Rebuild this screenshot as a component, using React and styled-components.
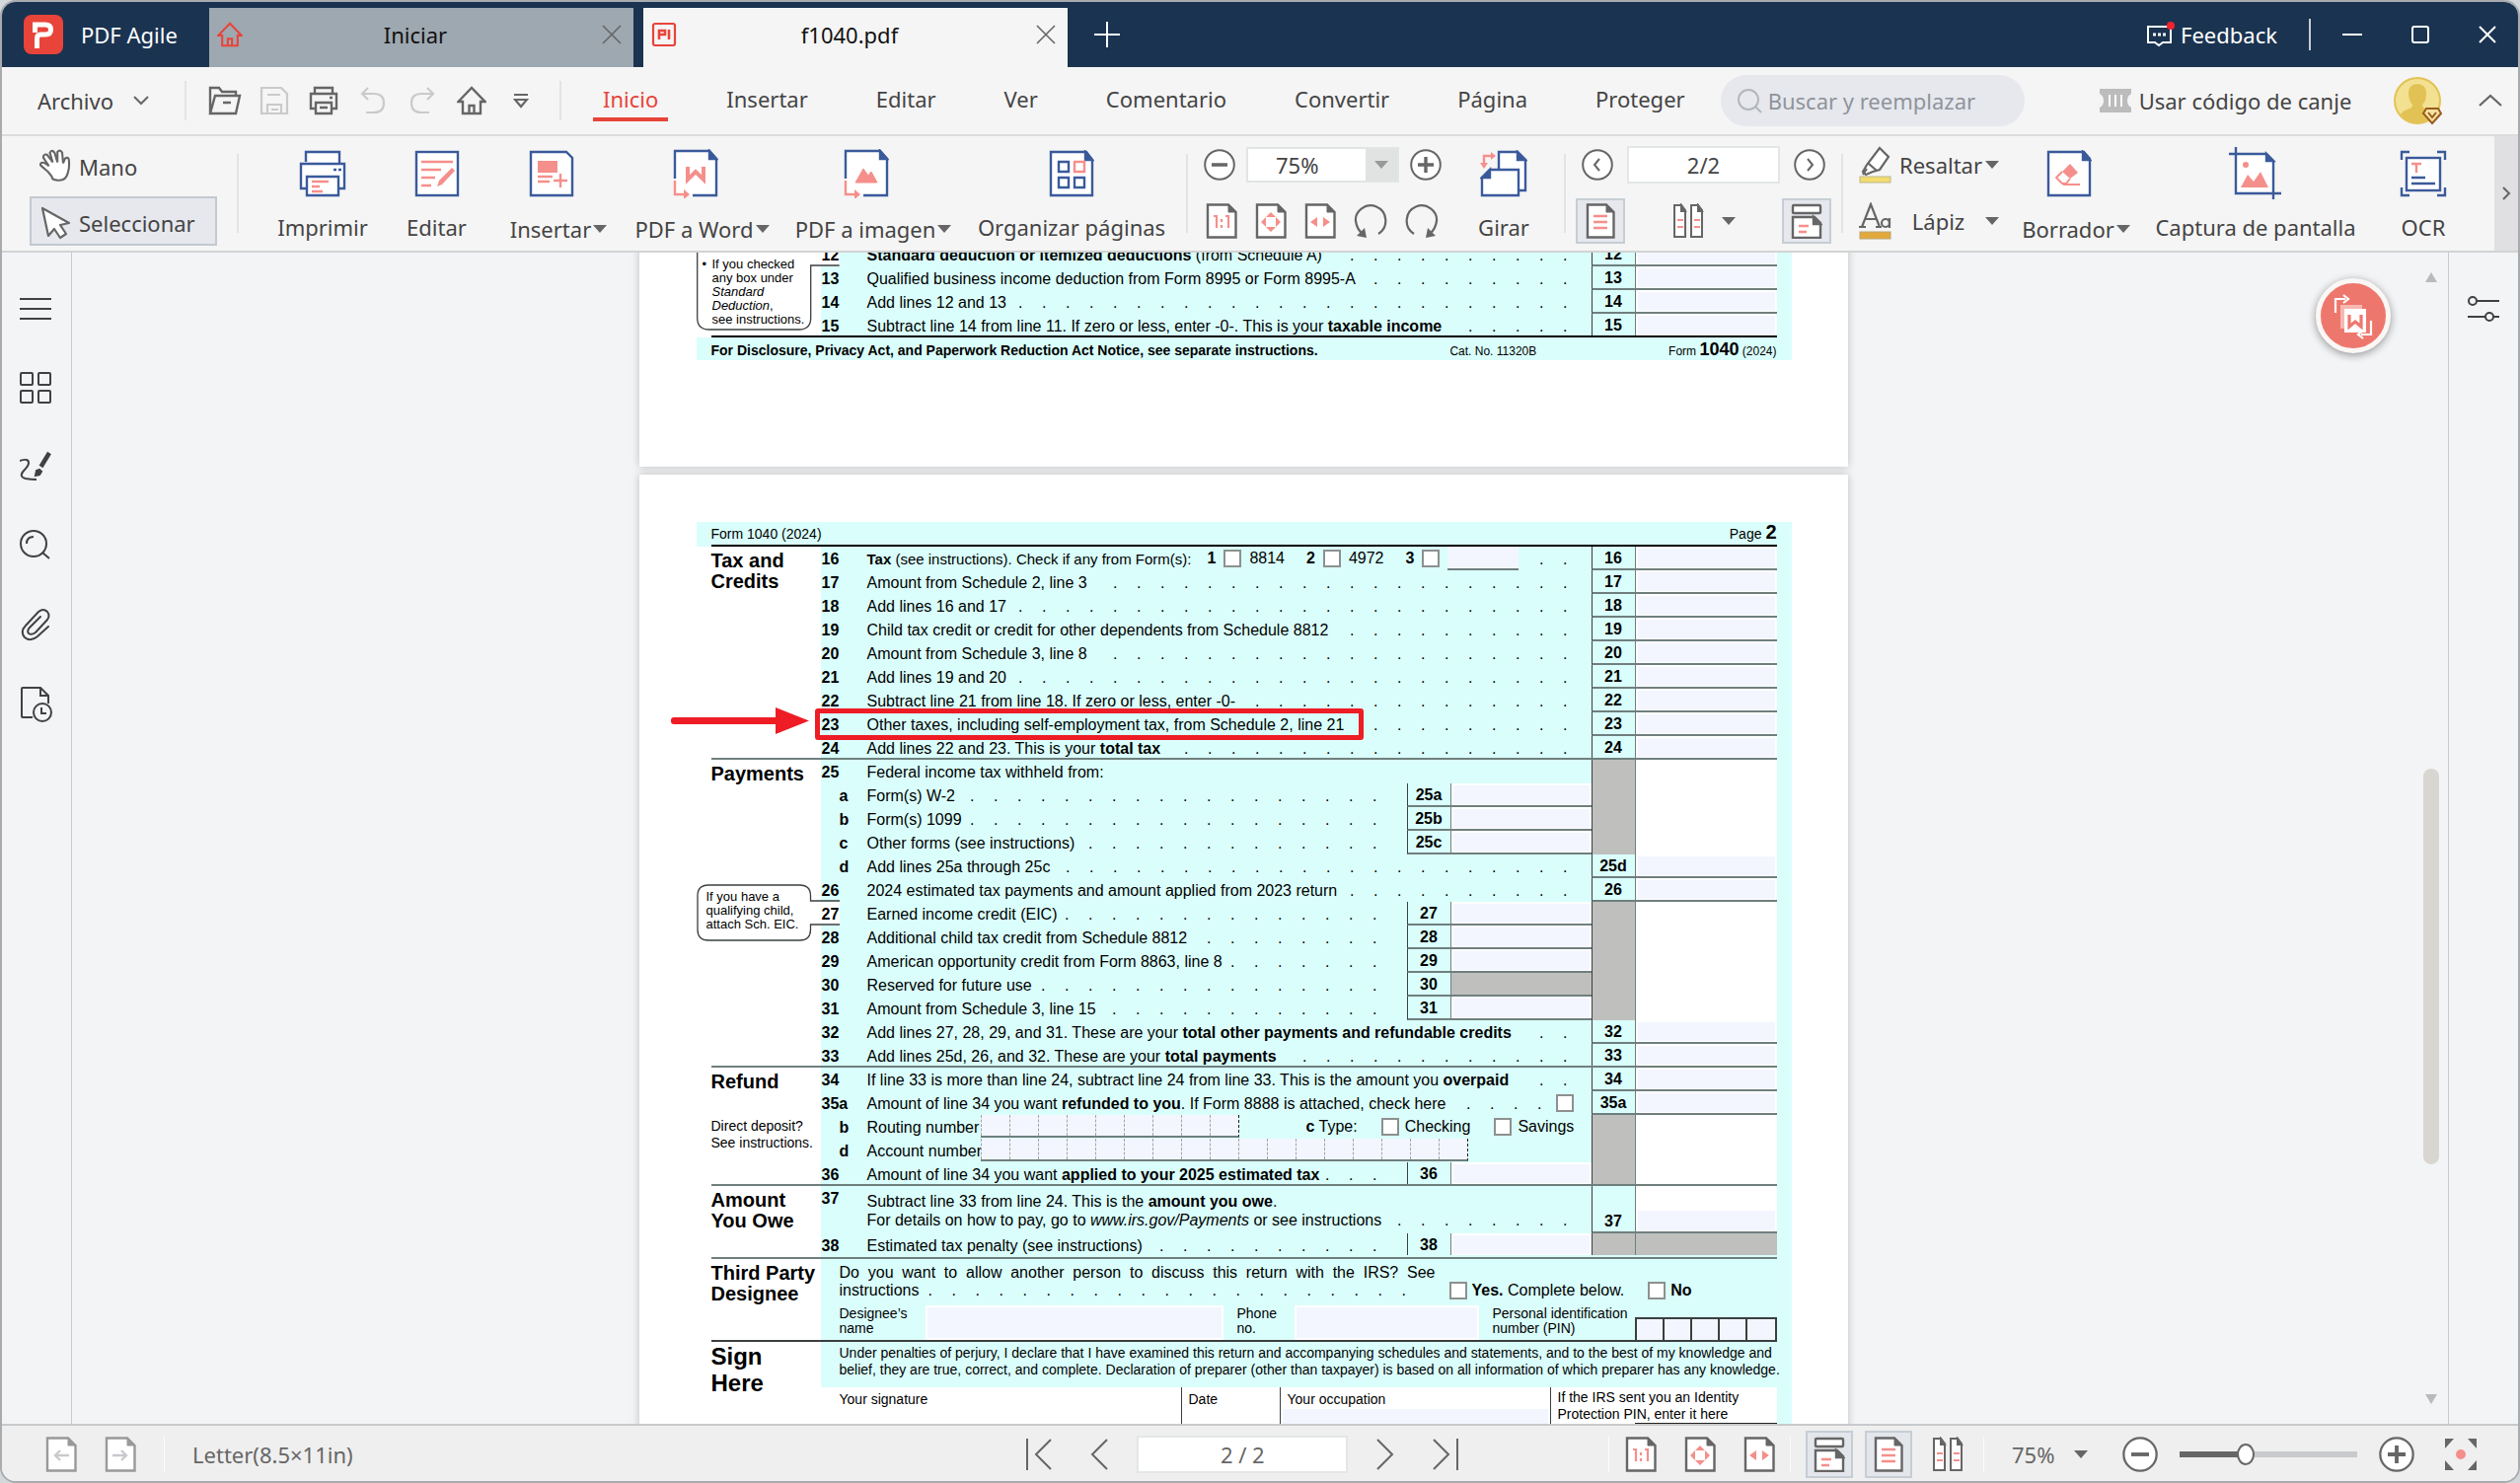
import React from "react";
import styled, { createGlobalStyle, css } from "styled-components";

const c = {
  navy: "#1a3350",
  chrome: "#f5f5f5",
  canvas: "#f3f4f6",
  line: "#dcdcdc",
  text: "#444444",
  icon: "#666666",
  blue: "#3a5a9b",
  pink: "#f58f8b",
  red: "#e8443a",
  cyan: "#dafefb",
  field: "#f3f6ff",
  rule: "#6f7f7e",
  dark: "#3a3f3f",
  shade: "#bfbfbd",
};

const GlobalStyle = createGlobalStyle`
  *, *::before, *::after { box-sizing: border-box; }
  body { margin: 0; background: #d3d8dc; }
  button, input, select { font: inherit; color: inherit; }
`;

/* ---------- window ---------- */

const Window = styled.div`
  display: flex;
  flex-direction: column;
  height: 100vh;
  border: 2px solid #a9acaf;
  border-radius: 16px;
  overflow: hidden;
  background: ${c.chrome};
  color: ${c.text};
  font-family: "Noto Sans", "Open Sans", sans-serif;
  font-size: 22px;
  line-height: 30px;
`;

const BareButton = styled.button`
  display: flex;
  align-items: center;
  justify-content: center;
  padding: 0;
  border: 0;
  background: none;
  cursor: pointer;
  white-space: nowrap;
`;

const TitleBar = styled.header`
  display: flex;
  align-items: center;
  flex: none;
  height: 66px;
  padding-right: 22px;
  background: ${c.navy};
  color: #fff;
`;

const Brand = styled.div`
  display: flex;
  align-items: center;
  gap: 18px;
  width: 210px;
  padding-left: 22px;
`;

const Tabs = styled.nav`
  display: flex;
  align-self: flex-end;
  gap: 10px;
`;

const Tab = styled.div`
  display: flex;
  align-items: center;
  width: 430px;
  height: 60px;
  padding: 0 12px 6px 8px;
  background: ${(p) => (p.$active ? c.chrome : "#9ea8b0")};
  color: #111;
`;

const TabTitle = styled.span`
  flex: 1;
  padding-right: 14px;
  text-align: center;
`;

const TitleActions = styled.div`
  display: flex;
  align-items: center;
  gap: 50px;
  margin-left: auto;
`;

const Feedback = styled(BareButton)`
  gap: 6px;
  color: #fff;
`;

const TitleDivider = styled.span`
  width: 2px;
  height: 32px;
  margin: 0 -18px;
  background: #c7ccd2;
`;

const NewTab = styled(BareButton)`
  width: 80px;
  color: #fff;
`;

/* ---------- menu ---------- */

const MenuBar = styled.div`
  display: flex;
  align-items: center;
  flex: none;
  height: 70px;
  padding: 0 16px 0 36px;
  border-bottom: 2px solid ${c.line};
`;

const FileMenu = styled(BareButton)`
  gap: 20px;
  margin-right: 14px;
`;

const Divider = styled.span`
  flex: none;
  width: 2px;
  height: ${(p) => p.$h || 80}px;
  margin: 0 ${(p) => p.$m || 16}px;
  background: #e2e4e4;
`;

const QuickTools = styled.div`
  display: flex;
  gap: 16px;
`;

const QuickButton = styled(BareButton)`
  width: 34px;
  height: 34px;
`;

const Menu = styled.nav`
  display: flex;
  gap: 49px;
  margin-left: 10px;
`;

const MenuItem = styled(BareButton)`
  height: 42px;
  padding: 0 10px;
  border-bottom: 4px solid ${(p) => (p.$active ? c.red : "transparent")};
  color: ${(p) => (p.$active ? c.red : c.text)};
`;

const Search = styled.label`
  display: flex;
  align-items: center;
  gap: 6px;
  width: 308px;
  height: 52px;
  margin: 0 76px 0 26px;
  padding: 0 16px;
  border-radius: 26px;
  background: #e6e8ee;
  color: #8f9499;
`;

const SearchInput = styled.input`
  flex: 1;
  min-width: 0;
  padding: 0;
  border: 0;
  outline: 0;
  background: none;
  &::placeholder {
    color: #8f9499;
    opacity: 1;
  }
`;

const MenuEnd = styled.div`
  display: flex;
  align-items: center;
  margin-left: auto;
`;

const Redeem = styled(BareButton)`
  gap: 8px;
`;

const AccountButton = styled(BareButton)`
  margin: 0 34px 0 42px;
`;

/* ---------- ribbon ---------- */

const Ribbon = styled.div`
  display: flex;
  flex: none;
  align-items: stretch;
  height: 118px;
  padding-left: 28px;
  border-bottom: 2px solid #d2d3d4;
`;

const RibbonDivider = styled(Divider)`
  margin-top: 18px;
`;

const Stack = styled.div`
  display: grid;
  grid-template-rows: 42px 50px;
  row-gap: 11px;
  align-content: start;
  padding-top: 8px;
  margin-right: ${(p) => p.$end || 0}px;
`;

const StackRow = styled.div`
  display: flex;
  align-items: center;
  gap: ${(p) => p.$gap || 0}px;
  padding-left: ${(p) => p.$pad || 0}px;
`;

const ModeButton = styled(BareButton)`
  justify-content: flex-start;
  gap: 6px;
  width: 190px;
  padding: 3px 0 0 8px;
  border: 2px solid ${(p) => (p.$active ? "#c3c9d0" : "transparent")};
  background: ${(p) => (p.$active ? "#e7e8ee" : "none")};
`;

const ToolButton = styled(BareButton)`
  flex-direction: column;
  justify-content: flex-start;
  flex: none;
  width: ${(p) => p.$w}px;
  padding-top: 13px;
`;

const ToolIcon = styled.span`
  display: flex;
  align-items: center;
  justify-content: center;
  height: 50px;
  margin-right: ${(p) => (p.$menu ? 14 : 0)}px;
`;

const ToolLabel = styled.span`
  display: flex;
  align-items: center;
  gap: 2px;
  padding-top: ${(p) => (p.$menu ? 16 : 14)}px;
`;

const ToggleButton = styled(BareButton)`
  width: 50px;
  height: 46px;
  border: 2px solid #c6cdd5;
  background: #e6e8ee;
`;

const SpreadButton = styled(BareButton)`
  gap: 18px;
`;

const ZoomBox = styled.span`
  display: flex;
  width: 155px;
  height: 36px;
  border: 2px solid #e1e5e4;
  background: #fff;
`;

const ZoomSelect = styled.select`
  flex: 1;
  min-width: 0;
  padding: 0 0 0 28px;
  border: 0;
  background: none;
  appearance: none;
  line-height: 30px;
`;

const ZoomArrow = styled.span`
  display: flex;
  align-items: center;
  justify-content: center;
  width: 32px;
  background: #e1e3e3;
`;

const PageInput = styled.input`
  width: ${(p) => p.$w}px;
  height: 38px;
  padding: 0;
  border: 2px solid #e3e7e6;
  background: #fff;
  text-align: center;
`;

const SpreadRow = styled.div`
  display: flex;
  align-items: center;
  justify-content: space-between;
  margin: 0 -6px;
`;

const Split = styled(BareButton)`
  justify-content: flex-start;
  gap: 8px;
`;

const SplitLabel = styled.span`
  width: 79px;
  text-align: center;
`;

const RibbonScroll = styled(BareButton)`
  width: 24px;
  margin-left: auto;
  background: #e0dfe1;
`;

/* ---------- work area ---------- */

const Work = styled.div`
  display: flex;
  flex: 1;
  min-height: 0;
  background: ${c.canvas};
`;

const Rail = styled.aside`
  display: flex;
  flex-direction: column;
  align-items: center;
  gap: 32px;
  width: 71px;
  padding: 33px 0 0;
  padding-right: ${(p) => (p.$right ? 0 : 2)}px;
  border-${(p) => (p.$right ? "left" : "right")}: 1px solid #c9cbce;
`;

const RailButton = styled(BareButton)`
  width: 48px;
  height: 48px;
  color: #3f4143;
`;

const Viewer = styled.main`
  position: relative;
  flex: 1;
  min-width: 0;
  overflow: hidden;
  color: #000;
  font-family: "Liberation Sans", Arial, sans-serif;
  font-size: 16px;
  line-height: 24px;
`;

const ScrollTrack = styled.div`
  display: flex;
  flex-direction: column;
  align-items: center;
  width: 34px;
  padding: 20px 0;
`;

const ScrollThumb = styled.span`
  width: 16px;
  height: 35%;
  margin: auto 0 233px;
  border-radius: 8px;
  background: #d9d6d1;
`;

const FloatButton = styled(BareButton)`
  position: absolute;
  right: 24px;
  top: 26px;
  width: 76px;
  height: 76px;
  border: 5px solid #faf7f5;
  border-radius: 50%;
  background: #ee776d;
  box-shadow: 0 2px 8px rgba(0, 0, 0, 0.4);
`;

/* ---------- form pages ---------- */

const Page = styled.article`
  width: 1225px;
  margin: 0 auto 8px;
  padding: ${(p) => (p.$first ? "0 57px 108px 58px" : "48px 57px 0 58px")};
  margin-top: ${(p) => (p.$first ? -10 : 0)}px;
  background: #fff;
  box-shadow: 0 0 8px rgba(0, 0, 0, 0.22);
`;

const Band = styled.div`
  display: flex;
  justify-content: space-between;
  padding: 0 15px;
  background: ${c.cyan};
  font-size: 14px;
`;

const HeadInner = styled.div`
  display: flex;
  flex: 1;
  align-items: baseline;
  justify-content: space-between;
  height: 25px;
  border-bottom: 2px solid #000;
  line-height: 20px;
`;

const FootInner = styled(HeadInner)`
  height: 23px;
  border: 0;
  line-height: 24px;
`;

const Small = styled.span`
  font-size: 12px;
`;

const Big = styled.b`
  font-size: ${(p) => p.$s}px;
`;

const Shell = styled.section`
  padding: 0 15px;
  background: linear-gradient(90deg, #fff 126px, ${c.cyan} 126px);
`;

const SectionInner = styled.div`
  position: relative;
  display: flex;
  border-bottom: ${(p) => (p.$open ? 0 : 2)}px solid ${(p) => p.$rule || c.rule};
`;

const Side = styled.div`
  width: 111px;
  padding-top: ${(p) => (p.$large ? 1 : 4)}px;
  font-size: 14px;
  line-height: 17px;
`;

const SideTitle = styled.h2`
  margin: 0 0 26px;
  font-size: ${(p) => (p.$large ? 24 : 20)}px;
  line-height: ${(p) => (p.$large ? 27 : 21)}px;
  white-space: nowrap;
`;

const Body = styled.div`
  flex: 1;
  min-width: 0;
`;

const Line = styled.div`
  position: relative;
  display: flex;
  height: ${(p) => (p.$tall ? 48 : p.$last ? 22 : 24)}px;
  line-height: 26px;
`;

const LineNo = styled.b`
  flex: none;
  width: ${(p) => (p.$notch ? 19 : 47)}px;
  margin-right: ${(p) => (p.$notch ? 28 : 0)}px;
  padding-left: ${(p) => (p.$sub ? 19 : 1)}px;
  background: ${(p) => (p.$notch ? "#fff" : "none")};
`;

const LineText = styled.span`
  flex: none;
  font-size: ${(p) => (p.$tight ? 15 : 16)}px;
  white-space: nowrap;
`;

const TallText = styled(LineText)`
  padding-top: 6px;
  line-height: 19px;
`;

const Leader = styled.span`
  display: flex;
  flex: 1;
  justify-content: flex-end;
  align-self: ${(p) => (p.$low ? "flex-end" : "auto")};
  min-width: 0;
  margin-right: ${(p) => (p.$short ? 30 : p.$empty ? 0 : 24)}px;
`;

const Dot = styled.span`
  flex: none;
  width: 24px;
  text-align: right;
`;

const ruleCss = css`
  border-bottom: ${(p) => (p.$rule ? 2 : 0)}px solid ${c.rule};
`;

const NoCell = styled.b`
  display: flex;
  align-items: flex-end;
  justify-content: center;
  flex: none;
  width: 44px;
  border-left: 1px solid ${c.dark};
  background: ${(p) => (p.$shade ? c.shade : c.cyan)};
  line-height: 20px;
  ${ruleCss}
`;

const FieldCell = styled.span`
  display: flex;
  flex: none;
  align-items: flex-end;
  width: ${(p) => (p.$mid ? 143 : 144)}px;
  padding: 2px 2px 1px;
  border-left: 1px solid ${c.rule};
  background: ${(p) => (p.$shade ? c.shade : "#fff")};
  ${ruleCss}
`;

const Field = styled.input`
  width: 100%;
  height: 100%;
  max-height: 20px;
  padding: 0;
  border: 0;
  background: ${c.field};
`;

const Check = styled.input`
  flex: none;
  width: 18px;
  height: 18px;
  margin: 0;
  border: 2px solid #8d9090;
  background: #fff;
  appearance: none;
`;

const Option = styled.label`
  display: flex;
  align-items: center;
  gap: ${(p) => p.$gap || 6}px;
  margin-left: ${(p) => p.$ml || 0}px;
  margin-right: ${(p) => p.$mr || 0}px;
  white-space: nowrap;
`;

const BlankField = styled.input`
  width: 72px;
  height: 24px;
  margin-left: 8px;
  padding: 0;
  border: 0;
  border-bottom: 2px solid ${c.rule};
  background: ${c.field};
`;

const CombLabel = styled.label`
  display: inline-block;
  width: 115px;
`;

const Comb = styled.span`
  display: flex;
  height: 23px;
  border-bottom: 2px solid ${c.rule};
  border-right: 1px dashed #222;
`;

const CombCell = styled.input`
  width: 29px;
  padding: 0;
  border: 0;
  border-left: 1px dashed #a5a5a5;
  border-radius: 0;
  background: ${c.field};
`;

const Mark = styled.span`
  position: absolute;
  left: -6px;
  top: -4px;
  width: 556px;
  height: 32px;
  border: 5px solid #ee1c25;
  border-radius: 3px;
`;

const Arrow = styled.svg`
  position: absolute;
  left: -152px;
  top: -5px;
`;

const Callout = styled.div`
  position: absolute;
  left: -15px;
  top: ${(p) => p.$top}px;
  width: 145px;
  padding: ${(p) => (p.$bullet ? "15px 0 0 16px" : "6px 0 0 10px")};
  font-size: 13px;
  line-height: 14px;
  white-space: nowrap;
`;

const CalloutShape = styled.svg`
  position: absolute;
  left: 0;
  top: 0;
`;

const Bullet = styled.span`
  position: absolute;
  left: 6px;
`;

const Designee = styled.div`
  height: 82px;
  padding: 5px 0 0 19px;
`;

const Question = styled.div`
  display: flex;
  align-items: flex-end;
  height: 36px;
  line-height: 18px;
`;

const QuestionText = styled.div`
  width: 604px;
  margin-right: 14px;
`;

const QuestionLine = styled.div`
  display: flex;
  height: 18px;
  text-align-last: ${(p) => (p.$fill ? "justify" : "left")};
  & > span:first-child {
    flex: ${(p) => (p.$fill ? 1 : "none")};
    white-space: nowrap;
  }
`;

const QuestionDots = styled.span`
  display: flex;
  flex: 1;
  justify-content: flex-end;
  margin-right: 10px;
`;

const DesigneeRow = styled.div`
  display: grid;
  grid-template-columns: 87px 302px 72px 187px 158px 144px;
  height: 35px;
  margin-top: 6px;
  font-size: 14px;
  line-height: 15px;
`;

const DesigneeLabel = styled.label`
  padding: 1px 0 0 ${(p) => (p.$in ? 14 : 0)}px;
`;

const BoxField = styled.input`
  min-width: 0;
  padding: 0;
  border: 2px solid #fff;
  background: ${c.field};
`;

const Pin = styled.span`
  display: grid;
  grid-template-columns: repeat(5, 1fr);
  align-self: end;
  height: 23px;
  border: 2px solid ${c.dark};
  border-bottom: 0;
`;

const PinCell = styled.input`
  min-width: 0;
  padding: 0;
  border: 0;
  border-right: 2px solid ${c.dark};
  background: ${c.field};
  &:last-child {
    border-right: 0;
  }
`;

const Perjury = styled.p`
  height: 46px;
  margin: 0;
  padding: 3px 0 0 19px;
  font-size: 14px;
  line-height: 17px;
  white-space: nowrap;
`;

const SignRow = styled.div`
  display: grid;
  grid-template-columns: 365px 100px 274px 1fr;
  height: 60px;
  background: #fff;
  font-size: 14px;
  line-height: 17px;
`;

const SignCell = styled.label`
  display: flex;
  flex-direction: column;
  padding: ${(p) => (p.$two ? 2 : 4)}px 2px 0 ${(p) => (p.$first ? 19 : 7)}px;
  border-left: ${(p) => (p.$first ? 0 : 1)}px solid ${c.dark};
`;

const SignField = styled.input`
  height: 30px;
  margin: 1px 0 0 -5px;
  padding: 0;
  border: 0;
  background: ${c.field};
`;

const PinField = styled.input`
  width: 144px;
  height: 24px;
  margin-left: auto;
  margin-right: -2px;
  border: 2px solid #222;
  background: ${c.field};
`;

/* ---------- status bar ---------- */

const StatusBar = styled.footer`
  display: grid;
  grid-template-columns: 981fr auto 1019fr;
  align-items: center;
  flex: none;
  height: 58px;
  padding: 2px 41px 0 44px;
  border-top: 2px solid #c8c9cc;
  background: #efefef;
  color: #666;
`;

const StatusGroup = styled.div`
  display: flex;
  align-items: center;
  justify-content: ${(p) => (p.$end ? "flex-end" : "flex-start")};
  gap: ${(p) => p.$gap}px;
`;

const StatusDivider = styled.span`
  width: 1px;
  height: 36px;
  margin: 0 ${(p) => p.$m || 0}px;
  background: #fbfbfb;
`;

const StatusToggle = styled(ToggleButton)`
  width: 48px;
  height: 48px;
  border-color: ${(p) => (p.$plain ? "transparent" : "#c6cdd5")};
  background: ${(p) => (p.$plain ? "none" : "#e3e6ea")};
`;

const StatusZoom = styled.select`
  width: 52px;
  padding: 0;
  border: 0;
  background: none;
  appearance: none;
`;

const ZoomPick = styled.span`
  display: flex;
  align-items: center;
  gap: 11px;
  margin: 0 23px 0 16px;
`;

const Slider = styled.input`
  width: 180px;
  height: 24px;
  margin: 0;
  background: none;
  appearance: none;
  &::-webkit-slider-runnable-track {
    height: 6px;
    background: linear-gradient(90deg, #666 37%, #c9cacd 37%);
  }
  &::-webkit-slider-thumb {
    width: 18px;
    height: 22px;
    margin-top: -8px;
    border: 2px solid #666;
    border-radius: 50%;
    background: #fff;
    appearance: none;
  }
`;

const FullButton = styled(BareButton)`
  margin-left: 18px;
`;

/* ---------- icons ---------- */

const Icon = ({ w, h = w, stroke = c.icon, sw = 2, fill = "none", children }) => (
  <svg width={w} height={h} viewBox={`0 0 ${w} ${h}`} fill={fill} stroke={stroke} strokeWidth={sw} aria-hidden="true">
    {children}
  </svg>
);

const Caret = ({ color = c.icon }) => (
  <Icon w={14} h={8} stroke="none" fill={color}><path d="M0 0h14l-7 8z" /></Icon>
);

const Logo = () => (
  <Icon w={40} stroke="none">
    <rect width="40" height="40" rx="8" fill={c.red} />
    <path d="M13.500 34V24q0-4 3.500-4h5q5.500 0 5.500-5t-5.500-5H11.500v8" stroke="#fff" strokeWidth="5" />
  </Icon>
);

const HomeIcon = ({ color = c.icon, w = 30 }) => (
  <svg width={w} height={w} viewBox="0 0 30 30" fill="none" stroke={color} strokeWidth="2.4" aria-hidden="true">
    <path d="M1.5 16 15 2l13.500 14H24v12H6V16zM12.500 28v-8h5v8" />
  </svg>
);

const CloseIcon = ({ s = 18, color = "#666", sw = 1.6 }) => (
  <Icon w={s} stroke={color} sw={sw}><path d={`M1 1 ${s - 1} ${s - 1}M${s - 1} 1 1 ${s - 1}`} /></Icon>
);

const Sheet = ({ w = 32, h = 36, color = c.icon, children, sw = 2.4 }) => (
  <Icon w={w} h={h} stroke={color} sw={sw}>
    <path d={`M2 1.5H${w - 9}L${w - 1.5} 9V${h - 1.5}H2z`} fill="#fff" />
    <path d={`M${w - 9} 1.5V9H${w - 1.5}z`} fill={color} strokeWidth="1" />
    {children}
  </Icon>
);

const ActualSize = () => (
  <Sheet><path d="M8 13h3v12M20 13h3v12M16 16v3M16 22v3" stroke={c.pink} strokeWidth="2.2" /></Sheet>
);
const FitPage = () => (
  <Sheet><path d="M16 9l5 5H11zM16 29l5-5H11zM6 19l5-5v10zM26 19l-5-5v10z" fill={c.pink} stroke="none" /></Sheet>
);
const FitWidth = () => (
  <Sheet><path d="M6 19l7-5v10zM26 19l-7-5v10z" fill={c.pink} stroke="none" /></Sheet>
);
const SinglePage = () => (
  <Sheet w={30} h={36}><path d="M8 13h14M8 19h14M8 25h14" stroke={c.pink} strokeWidth="2.4" /></Sheet>
);
const TwoPages = () => (
  <Icon w={32} h={36} sw={2}>
    <path d="M2 2h7l4 5v27H2zM19 2h7l4 5v27H19z" fill="#fff" />
    <path d="M9 2v6h4zM26 2v6h4z" fill={c.icon} />
    <path d="M5 17h6M5 24h6M22 17h6M22 24h6" stroke={c.pink} />
  </Icon>
);
const Continuous = () => (
  <Icon w={32} h={36} sw={2.4}>
    <rect x="2" y="2" width="28" height="8" fill="#fff" rx="1" />
    <path d="M2 14h22l6 6v15H2z" fill="#fff" />
    <path d="M23 14v7h7z" fill={c.icon} />
    <path d="M8 23h10M8 29h8" stroke={c.pink} />
  </Icon>
);

const Rotate = ({ flip }) => (
  <Icon w={34} h={36} sw={2.2}>
    <g transform={flip ? "matrix(-1 0 0 1 34 0)" : undefined}>
      <path d="M25 31C36 24 34 8 23 3.500S1 8 2 18q1 8 7 13" />
      <path d="M3 33l8-8 2 10z" fill={c.icon} stroke="none" />
    </g>
  </Icon>
);

const Circle = ({ s = 32, d, sw = 3.4 }) => (
  <svg width={s} height={s} viewBox="0 0 32 32" fill="none" stroke={c.icon} aria-hidden="true">
    <circle cx="16" cy="16" r="14.8" strokeWidth="2" fill="#fff" />
    <path d={d} strokeWidth={sw} />
  </svg>
);
const minus = "M8 16h16";
const plus = "M8 16h16M16 8v16";

const Chevron = ({ d, w = 14, h = 14, sw = 2, color = c.icon }) => (
  <Icon w={w} h={h} sw={sw} stroke={color}><path d={d} /></Icon>
);

const PrintBig = () => (
  <Icon w={48} h={48} stroke={c.blue} sw={2.4}>
    <path d="M7 12V2h34v12" fill="#fff" />
    <path d="M8 39H2V14h44v25h-6" fill="#fff" />
    <path d="M8 27h32v19H8z" fill="#fff" />
    <path d="M35 20h3M40 20h3" />
    <path d="M13 32h17M13 37h8M13 42h11" stroke={c.pink} />
  </Icon>
);
const EditBig = () => (
  <Icon w={46} h={48} stroke={c.blue} sw={2.4}>
    <rect x="2" y="2" width="42" height="44" fill="#fff" />
    <path d="M7 12h32M7 20h20M7 28h14M7 36h10" stroke={c.pink} />
    <path d="M23 37l2-6 13-13 3 3-13 14z" fill={c.pink} stroke="none" />
  </Icon>
);
const InsertBig = () => (
  <Icon w={46} h={48} stroke={c.blue} sw={2.4}>
    <path d="M2 2h36l6 6v38H2z" fill="#fff" />
    <rect x="9" y="11" width="20" height="12" fill={c.pink} stroke="none" />
    <path d="M9 27h15M9 32h12M32 24v14M25 31h14" stroke={c.pink} />
  </Icon>
);
const ConvertBig = ({ children }) => (
  <Icon w={46} h={50} stroke={c.blue} sw={2.4}>
    <path d="M2 2h35l7 8v37H2z" fill="#fff" stroke="none" />
    <path d="M2 30V2h35l7 8v37H20" />
    <path d="M37 2v8h7z" fill={c.blue} />
    <path d="M2 32v14h10" stroke={c.pink} />
    <path d="M11 41l6 5-6 5z" fill={c.pink} stroke="none" />
    {children}
  </Icon>
);
const OrganizeBig = () => (
  <Icon w={46} h={48} stroke={c.blue} sw={2.4}>
    <path d="M2 2h36l6 8v36H2z" fill="#fff" />
    <path d="M37 2v8h7z" fill={c.blue} />
    <path d="M10 12h10v10H10zM10 28h10v10H10zM26 28h10v10H26z" />
    <path d="M26 12h10v10H26z" stroke={c.pink} />
  </Icon>
);
const RotateBig = () => (
  <Icon w={48} h={48} stroke={c.blue} sw={2.4}>
    <path d="M19 2h19l8 8v31H19z" fill="#fff" />
    <path d="M38 2v8h8z" fill={c.blue} />
    <path d="M10 20h29v26H2V28z" fill="#fff" />
    <path d="M10 20v8H2z" fill={c.blue} />
    <path d="M4 15V6h8" stroke={c.pink} />
    <path d="M0 13h8l-4 6zM11 2l5 4-5 4z" fill={c.pink} stroke="none" />
  </Icon>
);
const EraserBig = () => (
  <Icon w={46} h={48} stroke={c.blue} sw={2.4}>
    <path d="M2 2h36l6 7v37H2z" fill="#fff" />
    <path d="M37 2v8h7z" fill={c.blue} />
    <path d="M24 14l8 9-8 6-8-7z" fill={c.pink} stroke="none" />
    <path d="M16 22l-6 6 6 6h4l4-5M17 35h17" stroke={c.pink} strokeWidth="2" />
  </Icon>
);
const CaptureBig = () => (
  <Icon w={54} h={54} stroke={c.blue} sw={2.4}>
    <path d="M8 7h30l7 7v32H8z" fill="#fff" stroke="none" />
    <path d="M0 7h38l7 7v39M7 0v47h46" />
    <path d="M38 7v7h7z" fill={c.blue} />
    <circle cx="17" cy="18" r="3" fill={c.pink} stroke="none" />
    <path d="M12 41l7-13 6 7 7-10 8 16z" fill={c.pink} stroke="none" />
  </Icon>
);
const OcrBig = () => (
  <Icon w={48} h={48} stroke={c.blue} sw={2.4}>
    <path d="M2 10V2h8M38 2h8v8M46 38v8h-8M10 46H2v-8" />
    <rect x="7" y="8" width="34" height="33" fill="#fff" />
    <path d="M12 14h10M17 14v9" stroke={c.pink} />
    <path d="M12 28h14M12 34h24" />
  </Icon>
);

const wordMark = <path d="M15 18v13l8-8 8 8V18" stroke={c.pink} strokeWidth="4" />;
const imageMark = (
  <path d="M12 34l8-14 5 7 3-4 6 11zM32 16h.1" fill={c.pink} stroke={c.pink} strokeWidth="1" />
);

/* ---------- form pieces ---------- */

const Dots = ({ n }) => Array.from({ length: n }, (_, i) => <Dot key={i}>.</Dot>);

function FormLine({ no, sub, notch, tight, children, dots = 0, mid, midShade, right, last, mark, extra, rightShade }) {
  return (
    <Line $last={last}>
      <LineNo $sub={sub} $notch={notch}>{no}</LineNo>
      <LineText $tight={tight}>{children}</LineText>
      {extra}
      <Leader $short={!!mid} $empty={!dots}><Dots n={dots} /></Leader>
      {mid && (
        <>
          <NoCell $rule={!last}>{mid}</NoCell>
          <FieldCell $mid $rule={!last} $shade={midShade}>
            {!midShade && <Field aria-label={`Line ${mid}`} />}
          </FieldCell>
        </>
      )}
      <NoCell $shade={!right} $rule={!!right && !last}>{right}</NoCell>
      <FieldCell $rule={!!right && !last} $shade={rightShade}>
        {right && <Field aria-label={`Line ${right}`} />}
      </FieldCell>
      {mark && (
        <>
          <Mark />
          <Arrow width="140" height="28" viewBox="0 0 140 28" fill="#ee1c25" aria-hidden="true">
            <rect x="0" y="10" width="110" height="7" rx="3" />
            <path d="M106 0l34 13.5L106 27z" />
          </Arrow>
        </>
      )}
    </Line>
  );
}

function Section({ title, note, large, rule, open, overlay, children }) {
  return (
    <Shell>
      <SectionInner $rule={rule} $open={open}>
        <Side $large={large}>
          {title && <SideTitle $large={large}>{title}</SideTitle>}
          {note}
        </Side>
        <Body>{children}</Body>
        {overlay}
      </SectionInner>
    </Shell>
  );
}

const CombField = ({ n, name }) => (
  <Comb>
    {Array.from({ length: n }, (_, i) => (
      <CombCell key={i} id={i === 0 ? name : undefined} aria-label={`${name} ${i + 1}`} />
    ))}
  </Comb>
);

function PageOne() {
  return (
    <Page $first>
      <Section
        rule="#000"
        overlay={
          <Callout $top={0} $bullet>
            <CalloutShape width="146" height="92" fill="none" stroke={c.dark} strokeWidth="1.3" aria-hidden="true">
              <path d="M.7 0V76q0 12 12 12h91q12 0 12-12V23h29" />
            </CalloutShape>
            <Bullet>•</Bullet>
            If you checked<br />any box under<br /><i>Standard<br />Deduction</i>,<br />see instructions.
          </Callout>
        }
      >
        <FormLine no="12" notch dots={10} right="12"><b>Standard deduction or itemized deductions</b> (from Schedule A)</FormLine>
        <FormLine no="13" dots={9} right="13">Qualified business income deduction from Form 8995 or Form 8995-A</FormLine>
        <FormLine no="14" dots={24} right="14">Add lines 12 and 13</FormLine>
        <FormLine no="15" dots={5} right="15" last>Subtract line 14 from line 11. If zero or less, enter -0-. This is your <b>taxable income</b></FormLine>
      </Section>
      <Band>
        <FootInner>
          <b>For Disclosure, Privacy Act, and Paperwork Reduction Act Notice, see separate instructions.</b>
          <Small>Cat. No. 11320B</Small>
          <Small>Form <Big $s={18}>1040</Big> (2024)</Small>
        </FootInner>
      </Band>
    </Page>
  );
}

function PageTwo() {
  return (
    <Page>
      <Band>
        <HeadInner>
          <span>Form 1040 (2024)</span>
          <span>Page <Big $s={20}>2</Big></span>
        </HeadInner>
      </Band>

      <Section title={<>Tax and<br />Credits</>}>
        <FormLine
          no="16" tight dots={2} right="16"
          extra={
            <>
              <Option $ml={16} $gap={8}><b>1</b><Check type="checkbox" /> 8814</Option>
              <Option $ml={22} $gap={8}><b>2</b><Check type="checkbox" /> 4972</Option>
              <Option $ml={22} $gap={8}><b>3</b><Check type="checkbox" /></Option>
              <BlankField aria-label="Other form" />
            </>
          }
        >
          <b>Tax</b> (see instructions). Check if any from Form(s):
        </FormLine>
        <FormLine no="17" dots={20} right="17">Amount from Schedule 2, line 3</FormLine>
        <FormLine no="18" dots={24} right="18">Add lines 16 and 17</FormLine>
        <FormLine no="19" dots={10} right="19">Child tax credit or credit for other dependents from Schedule 8812</FormLine>
        <FormLine no="20" dots={20} right="20">Amount from Schedule 3, line 8</FormLine>
        <FormLine no="21" dots={24} right="21">Add lines 19 and 20</FormLine>
        <FormLine no="22" dots={14} right="22">Subtract line 21 from line 18. If zero or less, enter -0-</FormLine>
        <FormLine no="23" dots={9} right="23" mark>Other taxes, including self-employment tax, from Schedule 2, line 21</FormLine>
        <FormLine no="24" dots={17} right="24" last>Add lines 22 and 23. This is your <b>total tax</b></FormLine>
      </Section>

      <Section
        title="Payments"
        overlay={
          <Callout $top={126}>
            <CalloutShape width="146" height="60" fill="none" stroke={c.dark} strokeWidth="1.3" aria-hidden="true">
              <path d="M145 17h-29.500v-5q0-11-11-11h-92.500q-11 0-11 11v34q0 11 11 11h92.500q11 0 11-11v-5h29.500" />
            </CalloutShape>
            If you have a<br />qualifying child,<br />attach Sch. EIC.
          </Callout>
        }
      >
        <FormLine no="25">Federal income tax withheld from:</FormLine>
        <FormLine sub no="a" dots={18} mid="25a">Form(s) W-2</FormLine>
        <FormLine sub no="b" dots={18} mid="25b">Form(s) 1099</FormLine>
        <FormLine sub no="c" dots={13} mid="25c">Other forms (see instructions)</FormLine>
        <FormLine sub no="d" dots={22} right="25d">Add lines 25a through 25c</FormLine>
        <FormLine no="26" dots={10} right="26">2024 estimated tax payments and amount applied from 2023 return</FormLine>
        <FormLine no="27" notch dots={14} mid="27">Earned income credit (EIC)</FormLine>
        <FormLine no="28" dots={8} mid="28">Additional child tax credit from Schedule 8812</FormLine>
        <FormLine no="29" dots={7} mid="29">American opportunity credit from Form 8863, line 8</FormLine>
        <FormLine no="30" dots={15} mid="30" midShade>Reserved for future use</FormLine>
        <FormLine no="31" dots={12} mid="31">Amount from Schedule 3, line 15</FormLine>
        <FormLine no="32" dots={2} right="32">Add lines 27, 28, 29, and 31. These are your <b>total other payments and refundable credits</b></FormLine>
        <FormLine no="33" dots={12} right="33" last>Add lines 25d, 26, and 32. These are your <b>total payments</b></FormLine>
      </Section>

      <Section title="Refund" note={<>Direct deposit?<br />See instructions.</>}>
        <FormLine no="34" dots={2} right="34">If line 33 is more than line 24, subtract line 24 from line 33. This is the amount you <b>overpaid</b></FormLine>
        <Line>
          <LineNo>35a</LineNo>
          <LineText>Amount of line 34 you want <b>refunded to you</b>. If Form 8888 is attached, check here</LineText>
          <Leader><Dots n={4} /></Leader>
          <Option $ml={-10} $mr={18}><Check type="checkbox" aria-label="Form 8888 is attached" /></Option>
          <NoCell $rule>35a</NoCell>
          <FieldCell $rule><Field aria-label="Line 35a" /></FieldCell>
        </Line>
        <FormLine
          sub no="b"
          extra={
            <>
              <CombField n={9} name="routing" />
              <Option $ml={68}><span><b>c</b> Type:</span></Option>
              <Option $ml={24}><Check type="checkbox" /> Checking</Option>
              <Option $ml={24}><Check type="checkbox" /> Savings</Option>
            </>
          }
        >
          <CombLabel htmlFor="routing">Routing number</CombLabel>
        </FormLine>
        <FormLine sub no="d" extra={<CombField n={17} name="account" />}>
          <CombLabel htmlFor="account">Account number</CombLabel>
        </FormLine>
        <FormLine no="36" dots={3} mid="36" last>Amount of line 34 you want <b>applied to your 2025 estimated tax</b></FormLine>
      </Section>

      <Section title={<>Amount<br />You Owe</>}>
        <Line $tall>
          <LineNo>37</LineNo>
          <TallText>
            Subtract line 33 from line 24. This is the <b>amount you owe</b>.<br />
            For details on how to pay, go to <i>www.irs.gov/Payments</i> or see instructions
          </TallText>
          <Leader $low><Dots n={8} /></Leader>
          <NoCell $rule>37</NoCell>
          <FieldCell $rule><Field aria-label="Line 37" /></FieldCell>
        </Line>
        <FormLine no="38" dots={10} mid="38" last rightShade>Estimated tax penalty (see instructions)</FormLine>
      </Section>

      <Section title={<>Third Party<br />Designee</>} rule={c.dark}>
        <Designee>
          <Question>
            <QuestionText>
              <QuestionLine $fill><span>Do you want to allow another person to discuss this return with the IRS? See</span></QuestionLine>
              <QuestionLine><span>instructions</span><QuestionDots><Dots n={21} /></QuestionDots></QuestionLine>
            </QuestionText>
            <Option $gap={5}><Check type="checkbox" /><span><b>Yes.</b> Complete below.</span></Option>
            <Option $gap={5} $ml={24}><Check type="checkbox" /><b>No</b></Option>
          </Question>
          <DesigneeRow>
            <DesigneeLabel htmlFor="dn">Designee’s<br />name</DesigneeLabel>
            <BoxField id="dn" />
            <DesigneeLabel $in htmlFor="dp">Phone<br />no.</DesigneeLabel>
            <BoxField id="dp" />
            <DesigneeLabel $in htmlFor="dpin">Personal identification<br />number (PIN)</DesigneeLabel>
            <Pin>
              {[1, 2, 3, 4, 5].map((n) => (
                <PinCell key={n} id={n === 1 ? "dpin" : undefined} aria-label={`PIN digit ${n}`} />
              ))}
            </Pin>
          </DesigneeRow>
        </Designee>
      </Section>

      <Section large title={<>Sign<br />Here</>} open>
        <Perjury>
          Under penalties of perjury, I declare that I have examined this return and accompanying schedules and statements, and to the best of my knowledge and<br />
          belief, they are true, correct, and complete. Declaration of preparer (other than taxpayer) is based on all information of which preparer has any knowledge.
        </Perjury>
        <SignRow>
          <SignCell $first>Your signature</SignCell>
          <SignCell>Date</SignCell>
          <SignCell>Your occupation<SignField /></SignCell>
          <SignCell $two><span>If the IRS sent you an Identity<br />Protection PIN, enter it here</span><PinField /></SignCell>
        </SignRow>
      </Section>
    </Page>
  );
}

/* ---------- app ---------- */

const menuItems = ["Inicio", "Insertar", "Editar", "Ver", "Comentario", "Convertir", "Página", "Proteger"];

const Tool = ({ icon, label, w, menu }) => (
  <ToolButton $w={w}>
    <ToolIcon $menu={menu}>{icon}</ToolIcon>
    <ToolLabel $menu={menu}>{label}{menu && <Caret />}</ToolLabel>
  </ToolButton>
);

export default function App() {
  return (
    <Window>
      <GlobalStyle />
      <TitleBar>
        <Brand><Logo />PDF Agile</Brand>
        <Tabs>
          <Tab>
            <HomeIcon color={c.red} w={26} />
            <TabTitle>Iniciar</TabTitle>
            <BareButton aria-label="Cerrar Iniciar"><CloseIcon s={20} /></BareButton>
          </Tab>
          <Tab $active>
            <Icon w={26} stroke={c.red} sw={2.2}>
              <rect x="2" y="2" width="22" height="22" rx="2" />
              <path d="M8 18V9h6v4H9M18 8v10" strokeWidth="2.6" />
            </Icon>
            <TabTitle>f1040.pdf</TabTitle>
            <BareButton aria-label="Cerrar f1040.pdf"><CloseIcon s={20} /></BareButton>
          </Tab>
        </Tabs>
        <NewTab aria-label="Nueva pestaña">
          <Icon w={26} stroke="#fff" sw={2}><path d="M13 0v26M0 13h26" /></Icon>
        </NewTab>
        <TitleActions>
          <Feedback>
            <Icon w={29} h={26} stroke="#fff" sw={2}>
              <path d="M2 5h23v16h-8l-4 3-4-3H2z" />
              <path d="M7 13h3M12 13h3M17 13h3" strokeWidth="3" />
              <circle cx="25" cy="4" r="4" fill="#f5222d" stroke="none" />
            </Icon>
            Feedback
          </Feedback>
          <TitleDivider />
          <BareButton aria-label="Minimizar"><Icon w={20} stroke="#fff"><path d="M0 10h20" /></Icon></BareButton>
          <BareButton aria-label="Maximizar"><Icon w={18} stroke="#fff"><rect x="1" y="1" width="16" height="16" rx="2" /></Icon></BareButton>
          <BareButton aria-label="Cerrar"><CloseIcon s={18} color="#fff" sw={2} /></BareButton>
        </TitleActions>
      </TitleBar>

      <MenuBar>
        <FileMenu>Archivo<Chevron w={16} h={12} d="M1 2l7 7 7-7" /></FileMenu>
        <Divider $h={40} $m={22} />
        <QuickTools>
          <QuickButton aria-label="Abrir">
            <Icon w={34} h={32} sw={2.4}><path d="M2 28V3h9l3 4h14v4M2 29 7 11h25l-4 18zM15 18h8" /></Icon>
          </QuickButton>
          <QuickButton aria-label="Guardar">
            <Icon w={30} h={30} stroke="#c9cacc" sw={2.2}><path d="M2 2h20l6 6v20H2zM8 9h13M8 28v-9h14v9M12 24h7" /></Icon>
          </QuickButton>
          <QuickButton aria-label="Imprimir">
            <Icon w={30} h={30} sw={2.4}><path d="M6 8V2h18v6M6 23H2V8h26v15h-4M7 17h16v11H7zM11 22h8M21 12h3" /></Icon>
          </QuickButton>
          <QuickButton aria-label="Deshacer">
            <Icon w={26} h={28} stroke="#c9cacc" sw={2.2}><path d="M8 1 2 7l6 6M2 7h12q10 0 10 9.500T14 26H6" /></Icon>
          </QuickButton>
          <QuickButton aria-label="Rehacer">
            <Icon w={26} h={28} stroke="#c9cacc" sw={2.2}><path d="M18 1l6 6-6 6M24 7H12Q2 7 2 16.500T12 26h8" /></Icon>
          </QuickButton>
          <QuickButton aria-label="Página de inicio"><HomeIcon /></QuickButton>
          <QuickButton aria-label="Más">
            <Icon w={16} h={16} sw={2.2}><path d="M1 2h14M2 7l6 7 6-7z" /></Icon>
          </QuickButton>
        </QuickTools>
        <Divider $h={40} $m={22} />
        <Menu>
          {menuItems.map((m, i) => <MenuItem key={m} $active={i === 0}>{m}</MenuItem>)}
        </Menu>
        <MenuEnd>
          <Search>
            <Icon w={26} stroke="#b3b6ba" sw={2}><circle cx="12" cy="12" r="10" /><path d="M19 19l6 6" /></Icon>
            <SearchInput placeholder="Buscar y reemplazar" aria-label="Buscar y reemplazar" />
          </Search>
          <Redeem>
            <Icon w={32} h={26} stroke="none" fill="#bcbcbc">
              <path d="M0 1h32v5q-4 2-4 7t4 7v5H0v-5q4-2 4-7T0 6z" />
              <path d="M10 7v12M16 7v12M22 7v12" stroke="#fff" strokeWidth="2" />
            </Icon>
            Usar código de canje
          </Redeem>
          <AccountButton aria-label="Cuenta">
            <Icon w={50} h={50} stroke="none">
              <circle cx="25" cy="25" r="24" fill="#e3c255" />
              <circle cx="25" cy="25" r="22" fill="#f3e192" />
              <path d="M25 8q9 0 9 10 0 8-4 11 0 4 6 6 3 2 4 5-6 8-15 8T8 39q2-4 9-6 3-1 3-4-4-4-4-11 0-10 9-10z" fill="#e3c255" />
              <path d="M34 33h12l3 5-9 10-9-10z" fill="#f6e2a0" stroke="#9a5b1c" strokeWidth="2" />
              <path d="M36 37l4 5 4-5" stroke="#9a5b1c" strokeWidth="2" />
            </Icon>
          </AccountButton>
          <BareButton aria-label="Contraer"><Chevron w={30} h={16} sw={2.2} d="M4 13 15 3l11 10" /></BareButton>
        </MenuEnd>
      </MenuBar>

      <Ribbon>
        <Stack>
          <ModeButton>
            <Icon w={34} h={36} sw={2.2}>
              <path d="M9 24Q3 19 1 17q0-4 5-2l4 3L4 9q0-4 4-3l6 8-3-10q2-4 5 0l3 10 0-11q3-3 5 1l1 11 2-5q3-2 4 1 1 8-1 14-2 9-11 8-6 0-6-4z" fill="#fff" transform="scale(.96)" />
            </Icon>
            Mano
          </ModeButton>
          <ModeButton $active>
            <Icon w={34} h={36} sw={2.2}><path d="M3 3l6 28 6-7 6 9 6-4-6-9 9-2z" fill="#fff" strokeLinejoin="round" /></Icon>
            Seleccionar
          </ModeButton>
        </Stack>
        <RibbonDivider $m={20} />
        <Tool w={130} icon={<PrintBig />} label="Imprimir" />
        <Tool w={101} icon={<EditBig />} label="Editar" />
        <Tool w={146} icon={<InsertBig />} label="Insertar" menu />
        <Tool w={145} icon={<ConvertBig>{wordMark}</ConvertBig>} label="PDF a Word" menu />
        <Tool w={202} icon={<ConvertBig>{imageMark}</ConvertBig>} label="PDF a imagen" menu />
        <Tool w={200} icon={<OrganizeBig />} label="Organizar páginas" />
        <RibbonDivider />
        <Stack $end={18}>
          <StackRow $gap={11}>
            <BareButton aria-label="Reducir"><Circle d={minus} /></BareButton>
            <ZoomBox>
              <ZoomSelect aria-label="Zoom" defaultValue="75%"><option>75%</option></ZoomSelect>
              <ZoomArrow><Caret color="#999" /></ZoomArrow>
            </ZoomBox>
            <BareButton aria-label="Ampliar"><Circle d={plus} /></BareButton>
          </StackRow>
          <StackRow $gap={18} $pad={2}>
            <BareButton aria-label="Tamaño real"><ActualSize /></BareButton>
            <BareButton aria-label="Ajustar página"><FitPage /></BareButton>
            <BareButton aria-label="Ajustar ancho"><FitWidth /></BareButton>
            <BareButton aria-label="Girar a la izquierda"><Rotate /></BareButton>
            <BareButton aria-label="Girar a la derecha"><Rotate flip /></BareButton>
          </StackRow>
        </Stack>
        <Tool w={90} icon={<RotateBig />} label="Girar" />
        <RibbonDivider />
        <Stack>
          <StackRow $gap={14}>
            <BareButton aria-label="Anterior"><Circle sw={2} d="M18 10l-5 6 5 6" /></BareButton>
            <PageInput $w={155} aria-label="Página" defaultValue="2/2" />
            <BareButton aria-label="Siguiente"><Circle sw={2} d="M14 10l5 6-5 6" /></BareButton>
          </StackRow>
          <SpreadRow>
            <ToggleButton aria-label="Una página"><SinglePage /></ToggleButton>
            <SpreadButton aria-label="Dos páginas"><TwoPages /><Caret /></SpreadButton>
            <ToggleButton aria-label="Continuo"><Continuous /></ToggleButton>
          </SpreadRow>
        </Stack>
        <RibbonDivider />
        <Stack>
          <Split>
            <Icon w={33} h={38} sw={2.2}>
              <path d="M21 2l9 9-9 13-7 2-7 3-3-3 4-7z" fill="#fff" />
              <path d="M9 17l9 8M4 29l4-6" />
              <rect x="1" y="31" width="31" height="6" fill="#f2dc6e" stroke="#bdb88f" strokeWidth="1" />
            </Icon>
            <SplitLabel>Resaltar</SplitLabel><Caret />
          </Split>
          <Split>
            <Icon w={33} h={38} sw={2.2}>
              <path d="M3 25 12 2l9 23M6 17h12M0 25h7M17 25h6" />
              <circle cx="27" cy="21" r="4" /><path d="M31 16v10" />
              <rect x="1" y="30" width="31" height="7" fill="#e3a93b" stroke="#b9a378" strokeWidth="1" />
            </Icon>
            <SplitLabel>Lápiz</SplitLabel><Caret />
          </Split>
        </Stack>
        <Tool w={156} icon={<EraserBig />} label="Borrador" menu />
        <Tool w={208} icon={<CaptureBig />} label="Captura de pantalla" />
        <Tool w={132} icon={<OcrBig />} label="OCR" />
        <RibbonScroll aria-label="Más herramientas"><Chevron w={10} h={16} d="M2 2l6 6-6 6" /></RibbonScroll>
      </Ribbon>

      <Work>
        <Rail>
          <RailButton aria-label="Menú"><Icon w={32} h={22} stroke="currentColor"><path d="M0 1h32M0 11h32M0 21h32" /></Icon></RailButton>
          <RailButton aria-label="Miniaturas">
            <Icon w={32} stroke="currentColor">
              <rect x="1" y="1" width="12" height="12" rx="1" /><rect x="19" y="1" width="12" height="12" rx="1" />
              <rect x="1" y="19" width="12" height="12" rx="1" /><rect x="19" y="19" width="12" height="12" rx="1" />
            </Icon>
          </RailButton>
          <RailButton aria-label="Firmas">
            <Icon w={33} h={32} stroke="currentColor">
              <path d="M0 10q9-3 9 2 0 3-4 7-7 7 1 9 5 1 11 1" />
              <path d="M30 2 21.5 16" strokeWidth="4.5" />
              <path d="M20 19l2 2-2 3-4 1 1-5z" fill="currentColor" />
            </Icon>
          </RailButton>
          <RailButton aria-label="Buscar">
            <Icon w={32} h={34} stroke="currentColor"><circle cx="14" cy="15" r="13" /><path d="M23 24l7 6M7 15q0-7 7-7" /></Icon>
          </RailButton>
          <RailButton aria-label="Adjuntos">
            <Icon w={32} h={34} stroke="currentColor">
              <path d="M29 19 18 29q-7 6-13 1-5-6 1-12L19 4q5-4 9 0 3 4 0 8L16 25q-4 3-7 1-2-3 1-6L21 9" strokeLinecap="round" />
            </Icon>
          </RailButton>
          <RailButton aria-label="Historial">
            <Icon w={34} h={38} stroke="currentColor">
              <path d="M14 33H4q-1 0-1-1V4q0-1 1-1h18l8 8v8M22 3v8h8" />
              <circle cx="24" cy="28" r="9" /><path d="M23 23v6h5" />
            </Icon>
          </RailButton>
        </Rail>

        <Viewer>
          <PageOne />
          <PageTwo />
          <FloatButton aria-label="Convertir a Word">
            <Icon w={50} h={50} stroke="#fff" sw={2.2}>
              <path d="M7 22V8h10M15 4l5 4-5 4" />
              <path d="M43 30v14H33M35 40l-5 4 5 4" />
              <path d="M12 14h22v6H18v18h-6z" fill="#f6b8b1" stroke="none" />
              <rect x="16" y="18" width="22" height="24" fill="#fff" stroke="none" />
              <path d="M21 24v12l6-5 6 5V24" stroke="#ee776d" strokeWidth="3.2" />
            </Icon>
          </FloatButton>
        </Viewer>
        <ScrollTrack>
          <Icon w={12} h={10} stroke="none" fill="#b9babb"><path d="M6 0l6 10H0z" /></Icon>
          <ScrollThumb />
          <Icon w={12} h={10} stroke="none" fill="#b9babb"><path d="M6 10l6-10H0z" /></Icon>
        </ScrollTrack>
        <Rail $right>
          <RailButton aria-label="Propiedades">
            <Icon w={32} h={28} stroke="currentColor">
              <circle cx="5" cy="6" r="4" /><path d="M9 6h23M0 22h18M26 22h6" /><circle cx="22" cy="22" r="4" />
            </Icon>
          </RailButton>
        </Rail>
      </Work>

      <StatusBar>
        <StatusGroup $gap={28}>
          <BareButton aria-label="Vista anterior"><Sheet color="#999"><path d="M10 19h14M15 14l-5 5 5 5" stroke="#c9cacd" /></Sheet></BareButton>
          <BareButton aria-label="Vista siguiente"><Sheet color="#999"><path d="M8 19h14M17 14l5 5-5 5" stroke="#c9cacd" /></Sheet></BareButton>
          <StatusDivider />
          <span>Letter(8.5×11in)</span>
        </StatusGroup>
        <StatusGroup $gap={28}>
          <BareButton aria-label="Primera página"><Chevron w={28} h={34} d="M3 1v32M27 2 12 17l15 15" /></BareButton>
          <BareButton aria-label="Página anterior"><Chevron w={30} h={34} d="M28 2 13 17l15 15" /></BareButton>
          <PageInput $w={214} aria-label="Página actual" defaultValue="2 / 2" />
          <BareButton aria-label="Página siguiente"><Chevron w={30} h={34} d="M2 2l15 15L2 32" /></BareButton>
          <BareButton aria-label="Última página"><Chevron w={28} h={34} d="M25 1v32M1 2l15 15L1 32" /></BareButton>
        </StatusGroup>
        <StatusGroup $end $gap={12}>
          <StatusDivider $m={4} />
          <StatusGroup $gap={28}>
            <BareButton aria-label="Tamaño real"><ActualSize /></BareButton>
            <BareButton aria-label="Ajustar página"><FitPage /></BareButton>
            <BareButton aria-label="Ajustar ancho"><FitWidth /></BareButton>
          </StatusGroup>
          <StatusDivider $m={3} />
          <StatusToggle aria-label="Continuo"><Continuous /></StatusToggle>
          <StatusToggle aria-label="Una página"><SinglePage /></StatusToggle>
          <StatusToggle $plain aria-label="Dos páginas"><TwoPages /></StatusToggle>
          <StatusDivider />
          <ZoomPick><StatusZoom aria-label="Zoom de página" defaultValue="75%"><option>75%</option></StatusZoom><Caret /></ZoomPick>
          <StatusGroup $gap={22}>
            <BareButton aria-label="Alejar"><Circle s={36} d={minus} /></BareButton>
            <Slider type="range" aria-label="Nivel de zoom" min="0" max="100" defaultValue="36" />
            <BareButton aria-label="Acercar"><Circle s={36} d={plus} /></BareButton>
          </StatusGroup>
          <FullButton aria-label="Pantalla completa">
            <Icon w={34} h={34} stroke="none" fill={c.icon}>
              <path d="M1 1h9l-9 10zM33 1h-9l9 10zM1 33h9L1 23zM33 33h-9l9-10z" />
              <circle cx="17" cy="17" r="5" fill={c.pink} />
            </Icon>
          </FullButton>
        </StatusGroup>
      </StatusBar>
    </Window>
  );
}
